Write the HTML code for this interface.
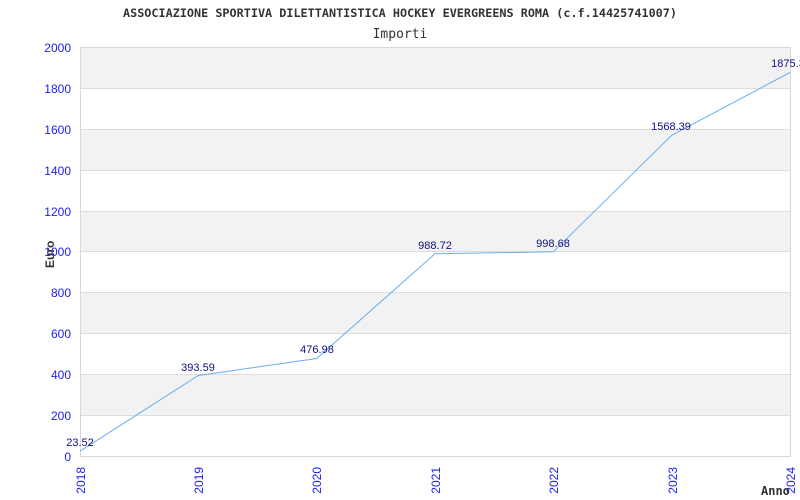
<!DOCTYPE html>
<html><head><meta charset="utf-8"><style>
html,body{margin:0;padding:0;background:#fff;width:800px;height:500px;overflow:hidden}
</style></head><body>
<svg width="800" height="500" xmlns="http://www.w3.org/2000/svg" font-family="Liberation Sans, sans-serif">
<rect width="800" height="500" fill="#fff"/>
<text x="400" y="17" text-anchor="middle" font-family="DejaVu Sans Mono, Liberation Mono, monospace" font-weight="bold" font-size="11.8" fill="#333">ASSOCIAZIONE SPORTIVA DILETTANTISTICA HOCKEY EVERGREENS ROMA (c.f.14425741007)</text>
<text x="400" y="38" text-anchor="middle" font-family="DejaVu Sans Mono, Liberation Mono, monospace" font-size="13" fill="#333">Importi</text>
<g fill="#f2f2f2">
<rect x="80" y="47" width="710" height="41"/>
<rect x="80" y="129" width="710" height="41"/>
<rect x="80" y="211" width="710" height="41"/>
<rect x="80" y="292" width="710" height="41"/>
<rect x="80" y="374" width="710" height="41"/>
</g>
<g stroke="#ddd" stroke-width="1">
<line x1="80" y1="88.5" x2="790" y2="88.5"/>
<line x1="80" y1="129.5" x2="790" y2="129.5"/>
<line x1="80" y1="170.5" x2="790" y2="170.5"/>
<line x1="80" y1="211.5" x2="790" y2="211.5"/>
<line x1="80" y1="251.5" x2="790" y2="251.5"/>
<line x1="80" y1="292.5" x2="790" y2="292.5"/>
<line x1="80" y1="333.5" x2="790" y2="333.5"/>
<line x1="80" y1="374.5" x2="790" y2="374.5"/>
<line x1="80" y1="415.5" x2="790" y2="415.5"/>
<rect x="80.5" y="47.5" width="710" height="409" fill="none" stroke="#d8d8d8"/>
</g>
<g fill="#2020ee" font-size="12" text-anchor="end">
<text x="71" y="52">2000</text>
<text x="71" y="93">1800</text>
<text x="71" y="134">1600</text>
<text x="71" y="175">1400</text>
<text x="71" y="216">1200</text>
<text x="71" y="256">1000</text>
<text x="71" y="297">800</text>
<text x="71" y="338">600</text>
<text x="71" y="379">400</text>
<text x="71" y="420">200</text>
<text x="71" y="461">0</text>
</g>
<text transform="translate(54,268) rotate(-90)" font-size="12" font-weight="bold" fill="#333">Euro</text>
<g fill="#2020ee" font-size="12" text-anchor="end">
<text transform="translate(85,467) rotate(-90)">2018</text>
<text transform="translate(203,467) rotate(-90)">2019</text>
<text transform="translate(321,467) rotate(-90)">2020</text>
<text transform="translate(440,467) rotate(-90)">2021</text>
<text transform="translate(558,467) rotate(-90)">2022</text>
<text transform="translate(677,467) rotate(-90)">2023</text>
<text transform="translate(795,467) rotate(-90)">2024</text>
</g>
<text x="761" y="495" font-family="DejaVu Sans Mono, monospace" font-weight="bold" font-size="12" fill="#333">Anno</text>
<polyline fill="none" stroke="#6aaef0" stroke-width="1" points="80,451.2 198.3,375.5 316.7,358.5 435,253.8 553.3,251.8 671.7,135.3 790,72.5"/>
<g fill="#101080" font-size="11" text-anchor="middle">
<text x="80" y="446">23.52</text>
<text x="198" y="371">393.59</text>
<text x="317" y="353">476.98</text>
<text x="435" y="249">988.72</text>
<text x="553" y="247">998.68</text>
<text x="671" y="130">1568.39</text>
<text x="788" y="67">1875.3</text>
</g>
</svg>
</body></html>
